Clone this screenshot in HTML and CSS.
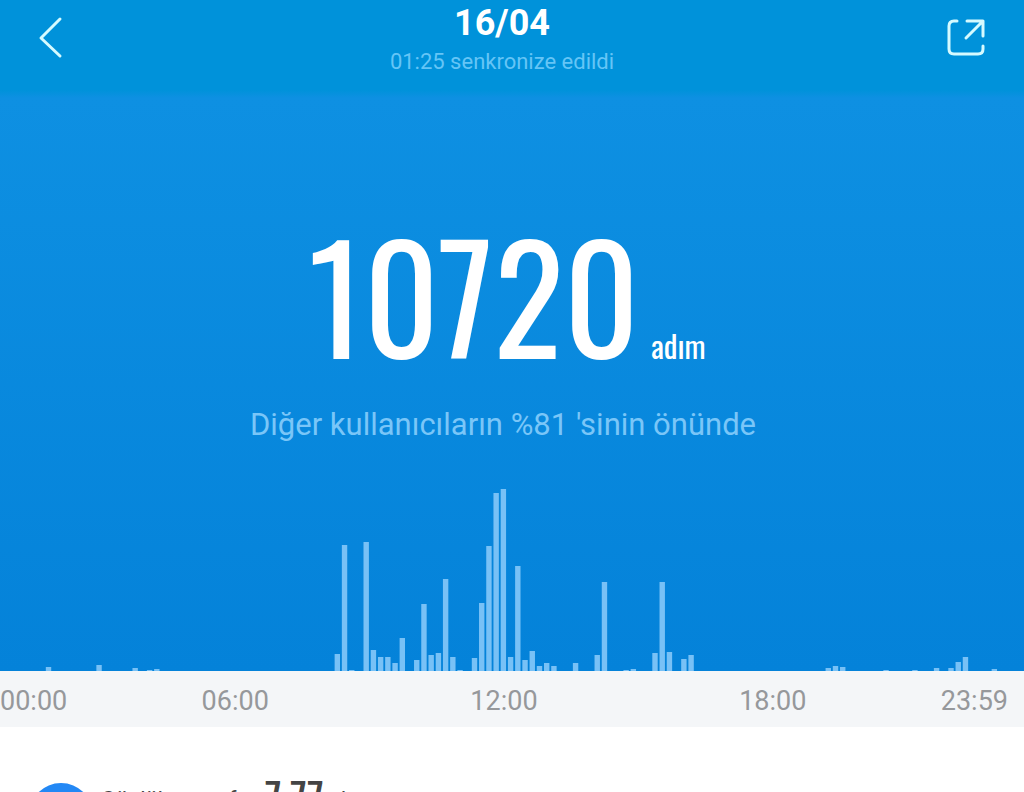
FILE: index.html
```html
<!DOCTYPE html>
<html lang="tr">
<head>
<meta charset="utf-8">
<meta name="viewport" content="width=device-width, initial-scale=1">
<title>10720 adım</title>
<link rel="stylesheet" href="styles.css">
</head>
<body>
<main class="page">
  <header class="topbar">
    <button class="icon-button" type="button" aria-label="Geri">
      <svg class="icon" viewBox="0 0 40 40" aria-hidden="true"><path d="M40 1 L21 20 L40 38"/></svg>
    </button>
    <div class="heading">
      <h1 class="date">16/04</h1>
      <p class="sync">01:25 senkronize edildi</p>
    </div>
    <button class="icon-button" type="button" aria-label="Paylaş">
      <svg class="icon" viewBox="0 0 40 40" aria-hidden="true"><path d="M13 3 H10 Q5 3 5 8 V31 Q5 36 10 36 H34 Q39 36 39 31 V28 M23 3 H39 V18 M39 3 L22 20"/></svg>
    </button>
  </header>
  <section class="summary">
    <p class="steps"><span class="count">10720</span><span class="unit">adım</span></p>
    <p class="rank">Diğer kullanıcıların %81 'sinin önünde</p>
    <svg class="chart" viewBox="0 0 1024 186" preserveAspectRatio="none" role="img" aria-label="Saatlik adımlar"></svg>
  </section>
  <div class="hours">
    <span>00:00</span><span>06:00</span><span>12:00</span><span>18:00</span><span>23:59</span>
  </div>
  <section class="detail">
    <span class="dot"></span>
    <p class="detail-text"><span class="detail-label">Günlük mesafe</span><span class="detail-value">7.77</span><span class="detail-label">km</span></p>
  </section>
</main>
<script src="chart.js"></script>
</body>
</html>
```
FILE: styles.css
```css
* { box-sizing: border-box; }
body { margin: 0; background: #fff; font-family: Roboto, "Liberation Sans", sans-serif; }
h1, p { margin: 0; }
.page { height: 100vh; overflow: hidden; }
.topbar {
  display: flex;
  justify-content: space-between;
  align-items: flex-start;
  height: 98px;
  padding: 0 40px 0 20px;
  background: linear-gradient(#0092da 92%, #0e90e2);
}
.icon-button { padding: 0; margin-top: 18px; border: 0; background: none; }
.icon { display: block; width: 40px; height: 40px; overflow: visible; fill: none; stroke: #d5faff; stroke-width: 3; stroke-linecap: round; stroke-linejoin: round; }
.heading { text-align: center; color: #fff; }
.date { font-size: 36px; line-height: 46px; font-weight: 700; }
.sync { font-size: 22px; line-height: 32px; color: #65c5f6; }
.summary {
  padding-top: 115px;
  background: linear-gradient(#0e90e2, #0482d9);
  text-align: center;
}
.steps {
  display: flex;
  justify-content: center;
  align-items: baseline;
  gap: 12px;
  padding-right: 10px;
  color: #fff;
  font-family: Oswald, "Roboto Condensed", "Liberation Sans Narrow", sans-serif;
}
.count { font-size: 146px; line-height: 160px; }
.unit { font-size: 31px; line-height: 40px; }
.rank { margin-top: 32px; padding-right: 18px; font-size: 31px; line-height: 40px; color: #7ac6f8; }
.chart { display: block; width: 100%; height: 186px; margin-top: 40px; fill: #78c1f6; }
.hours {
  display: grid;
  grid-template-columns: auto 5fr 3fr 5fr auto;
  padding: 4px 16px 0 0;
  background: #f4f6f8;
  color: #96989b;
  font-size: 27px;
  line-height: 52px;
  text-align: center;
}
.detail { display: flex; align-items: flex-start; gap: 8px; padding: 51px 29px; color: #444; }
.dot { width: 64px; height: 64px; margin-top: 5px; border-radius: 50%; background: #2388f5; }
.detail-text { display: flex; align-items: flex-start; gap: 17px; line-height: 40px; }
.detail-label { padding-top: 2px; font-size: 22px; }
.detail-value { font-family: Oswald, "Roboto Condensed", "Liberation Sans Narrow", sans-serif; font-size: 44px; }
```
FILE: chart.js
```js
// Slot number in the day and bar height.
const bars = [
  [6, 4], [13, 6], [18, 3], [20, 1], [21, 2],
  [46, 17], [47, 126], [48, 1], [50, 129], [51, 21], [52, 14], [53, 14], [54, 8], [55, 33],
  [57, 11], [58, 67], [59, 16], [60, 18], [61, 92], [62, 14], [63, 1],
  [65, 13], [66, 68], [67, 125], [68, 178], [69, 182], [70, 14], [71, 105],
  [72, 11], [73, 20], [74, 5], [75, 8], [76, 5], [79, 8], [82, 16], [83, 89],
  [86, 1], [87, 2], [90, 18], [91, 89], [92, 19], [94, 12], [95, 16],
  [114, 3], [115, 5], [116, 4], [122, 1], [126, 1], [129, 3], [131, 3], [132, 9], [133, 14], [137, 2]
];
const chart = document.querySelector(".chart");
for (const [slot, height] of bars) {
  const bar = document.createElementNS("http://www.w3.org/2000/svg", "rect");
  bar.setAttribute("x", 2.5 + slot * 7.22);
  bar.setAttribute("y", 186 - height);
  bar.setAttribute("width", 5.4);
  bar.setAttribute("height", height);
  chart.append(bar);
}
```
